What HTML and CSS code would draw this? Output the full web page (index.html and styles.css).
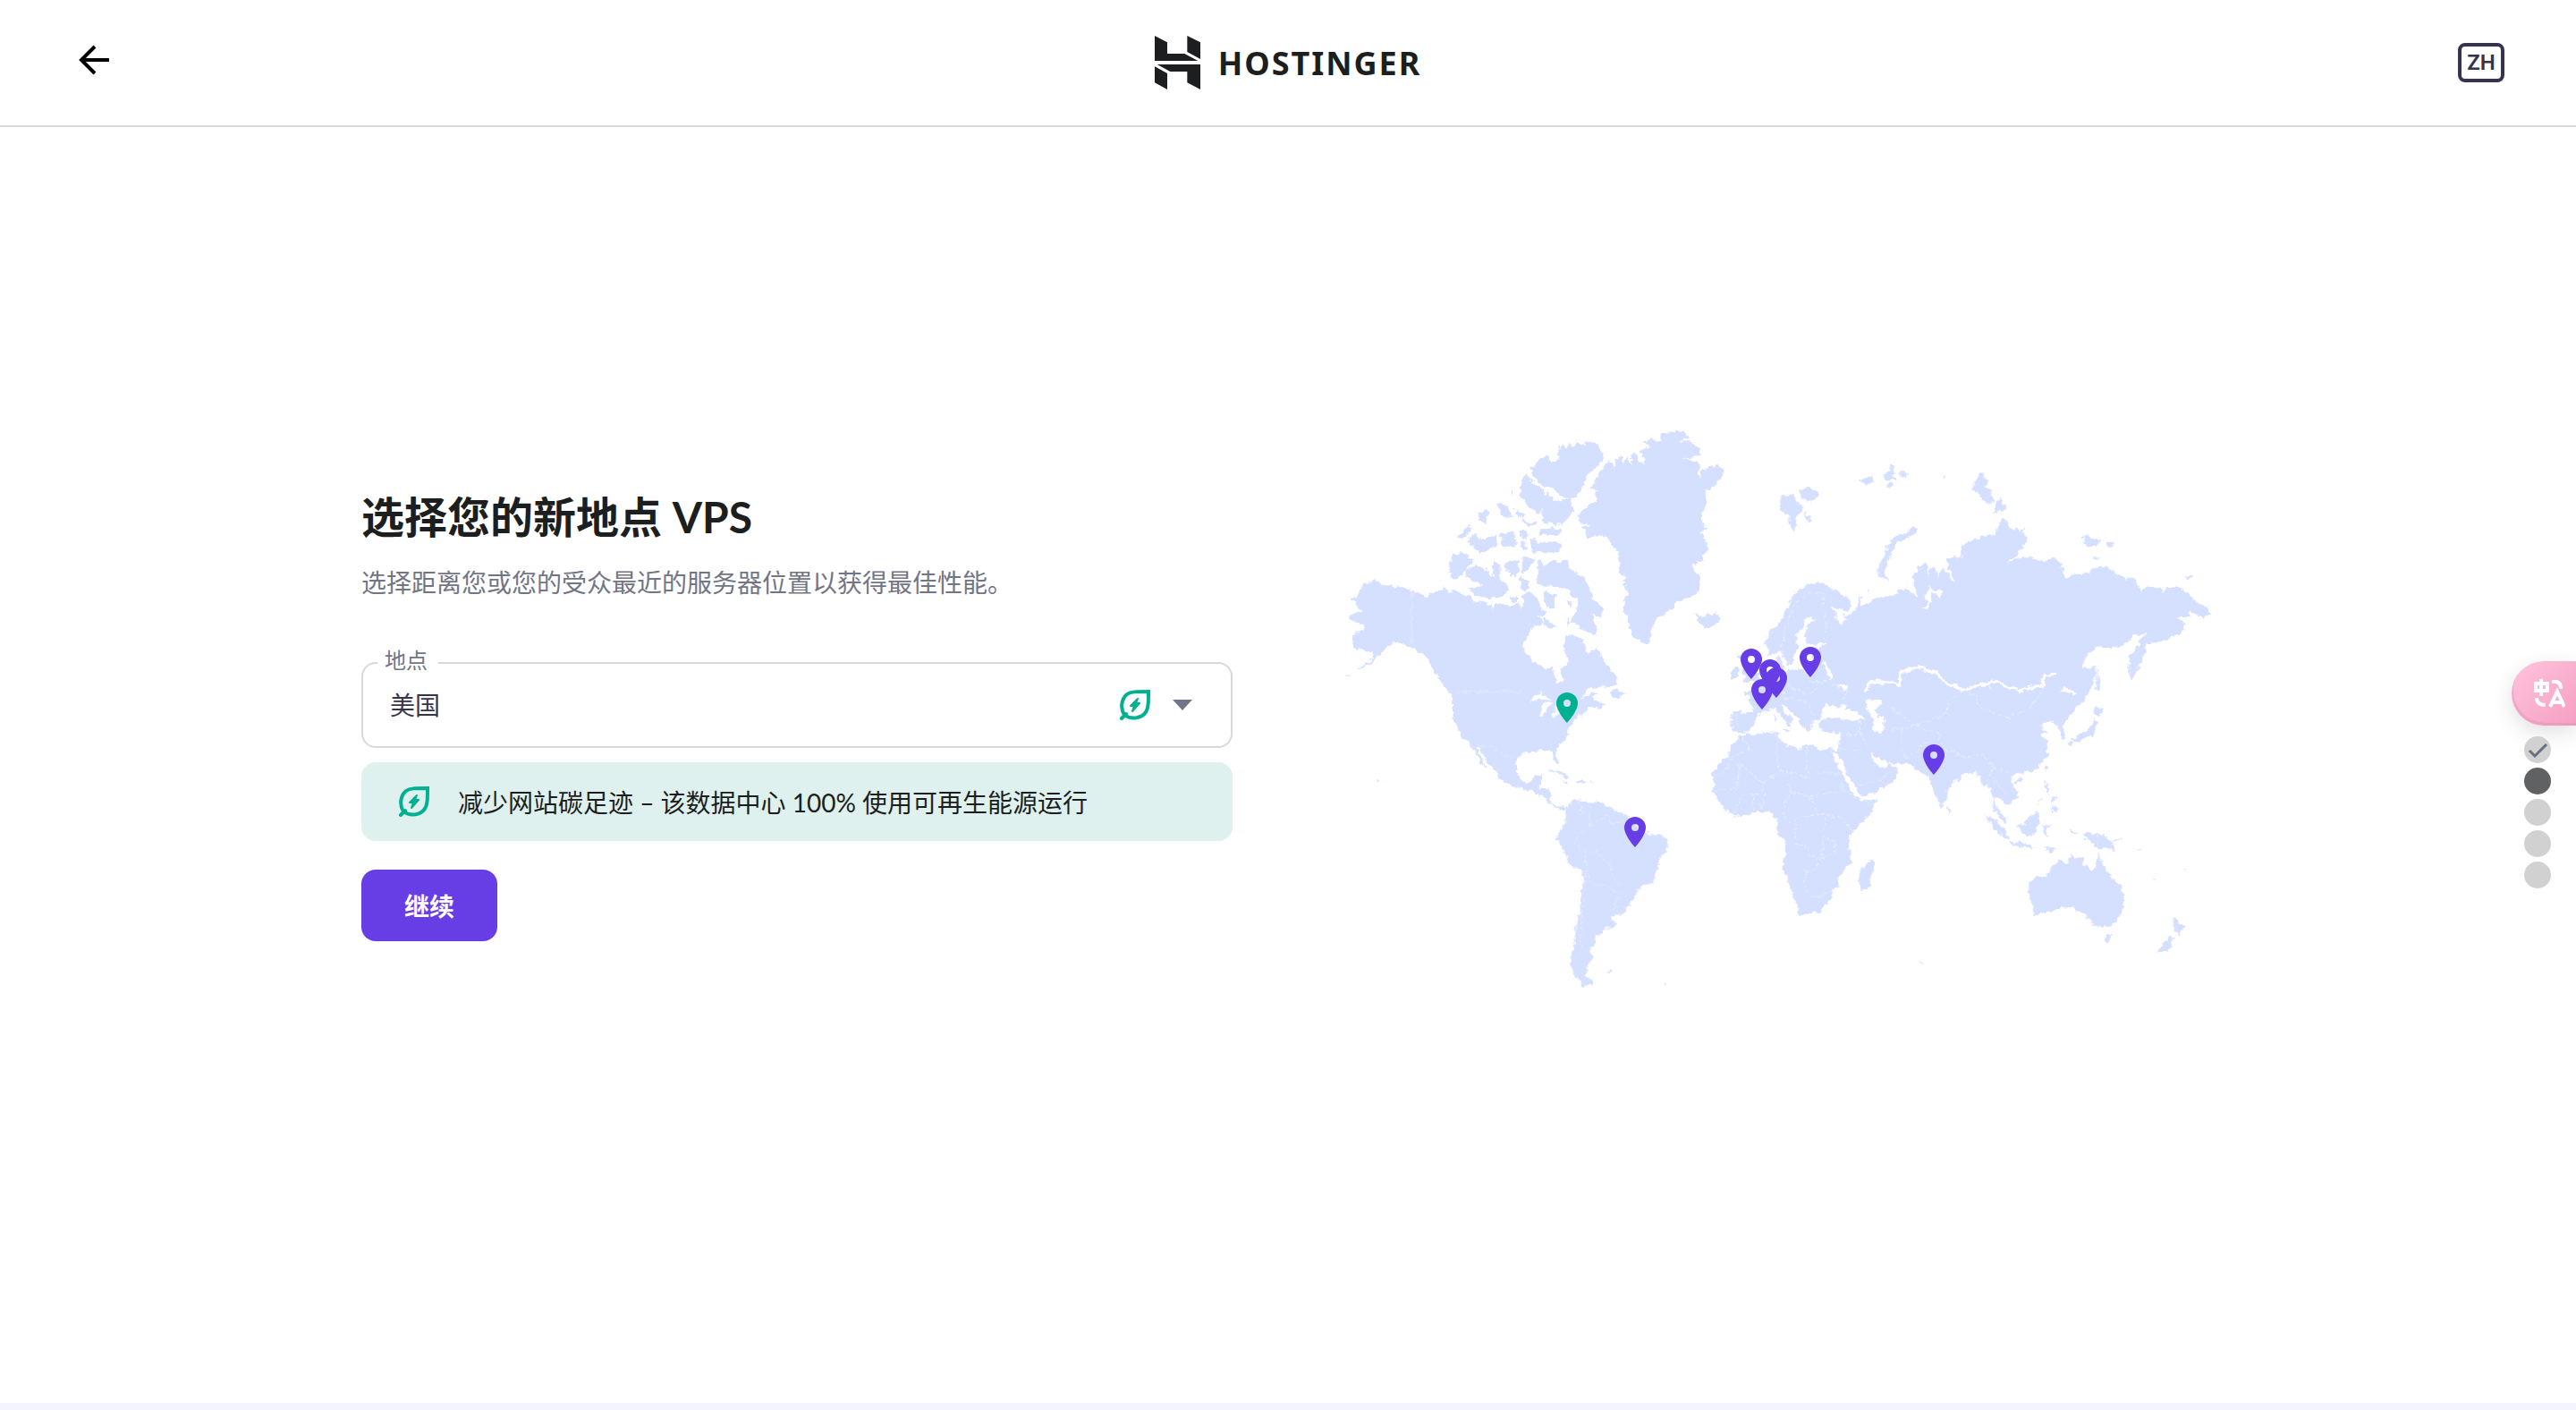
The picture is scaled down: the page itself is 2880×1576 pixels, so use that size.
FILE: index.html
```html
<!DOCTYPE html>
<html lang="zh-CN">
<head>
  <meta charset="utf-8">
  <meta name="viewport" content="width=device-width, initial-scale=1">
  <title>Hostinger VPS</title>
  <link rel="stylesheet" href="styles.css">
</head>
<body>
  <svg class="defs" width="0" height="0" aria-hidden="true">
    <symbol id="eco" viewBox="0 0 34 34">
      <path d="M5 28C0 20 2 10 8 5 12 2 18 2 32 2 32 14 32 20 29 25 24 32 13 34 5 28ZM7 27L2 32" fill="none" stroke="#00b090" stroke-width="4" stroke-linecap="round"/>
      <path d="M20 10L12 18H16L14 24 22 15H18Z" fill="#00b090" stroke="#00b090" stroke-width="2" stroke-linejoin="round"/>
    </symbol>
    <symbol id="pin" viewBox="0 0 24 34">
      <path fill-rule="evenodd" d="M12 0A12 12 0 0 0 0 12C0 21 12 34 12 34S24 21 24 12A12 12 0 0 0 12 0ZM12 8A4 4 0 1 1 12 16 4 4 0 0 1 12 8Z"/>
    </symbol>
  </svg>

  <header class="header">
    <button class="back" aria-label="返回">
      <svg width="36" height="40" viewBox="0 0 36 40"><path d="M18 2L3 17 18 32M3 17H34" fill="none" stroke="#000" stroke-width="4"/></svg>
    </button>
    <a class="logo" href="#">
      <svg width="51" height="60" viewBox="90 60 153 180" fill="#1d1e20">
        <path d="M90 60L132 82V120H190L235 144H90ZM199 60L243 82V138L199 114ZM98 156H243V240L199 217V180H142ZM90 163L132 186V240L90 217Z"/>
      </svg>
      <span class="logo-text">HOSTINGER</span>
    </a>
    <button class="lang">ZH</button>
  </header>

  <main class="main">
    <form class="form">
      <h1 class="title">选择您的新地点 VPS</h1>
      <p class="subtitle">选择距离您或您的受众最近的服务器位置以获得最佳性能。</p>
      <div class="field">
        <label class="field-label" for="location">地点</label>
        <select class="field-select" id="location">
          <option>美国</option>
        </select>
        <div class="field-icons">
          <svg width="34" height="34"><use href="#eco"/></svg>
          <svg width="24" height="12" viewBox="0 0 24 12"><path d="M1 0H23L12 12Z" fill="#727586"/></svg>
        </div>
      </div>
      <div class="notice">
        <svg width="34" height="34"><use href="#eco"/></svg>
        <span>减少网站碳足迹 – 该数据中心 100% 使用可再生能源运行</span>
      </div>
      <button class="submit" type="button">继续</button>
    </form>

    <svg class="map" viewBox="1502 480 974 638">
      <filter id="coast" x="-5%" y="-5%" width="110%" height="110%">
        <feTurbulence type="fractalNoise" baseFrequency="0.16" numOctaves="3" seed="4"/>
        <feDisplacementMap in="SourceGraphic" scale="8" xChannelSelector="R" yChannelSelector="G"/>
      </filter>
      <g class="land" filter="url(#coast)">
        <!-- North America and Greenland -->
        <g transform="translate(1480 460) scale(.3333)">
          <path d="M170 562L185 575 205 580 240 585 295 600 325 612 342 622 352 612 385 600 405 590 415 605 445 602 470 608 500 625 510 640 540 642 560 648 567 665 575 645 600 645 630 650 655 645 660 662 668 640 665 620 680 605 700 610 715 625 720 645 735 655 730 670 745 675 735 690 710 685 735 700 725 715 700 722 690 740 672 775 670 800 690 825 715 845 740 858 770 862 775 880 785 905 795 912 802 895 795 865 815 850 818 830 808 810 808 770 815 748 835 750 850 755 865 765 875 780 875 800 890 812 905 800 912 785 925 810 940 835 960 860 985 885 985 905 960 920 925 925 895 928 870 955 855 970 880 955 905 940 920 942 905 955 910 970 930 975 950 985 915 1000 905 990 870 1008 865 1020 845 1030 830 1050 820 1065 822 1090 800 1108 778 1128 778 1150 790 1175 785 1185 770 1165 768 1140 740 1135 700 1142 665 1148 648 1160 648 1205 660 1235 675 1245 700 1238 708 1218 735 1216 725 1240 722 1262 755 1265 762 1285 758 1305 780 1325 800 1325 812 1330 805 1340 780 1330 750 1310 735 1290 705 1280 680 1265 650 1262 615 1248 585 1230 582 1210 560 1185 535 1155 515 1125 510 1130 530 1165 550 1200 535 1192 515 1160 495 1120 465 1098 450 1065 435 1040 432 1000 432 965 405 925 385 895 370 870 355 840 330 812 310 795 285 788 260 780 235 770 215 785 185 820 150 850 110 868 140 845 165 825 160 810 125 800 100 790 95 760 105 740 135 730 135 710 95 705 80 688 105 675 135 670 115 655 90 632 120 605 135 580Z"/>
          <path d="M1180 62L1210 68 1228 90 1185 102 1232 98 1265 125 1262 145 1240 155 1198 160 1245 165 1262 180 1255 228 1268 205 1285 185 1320 178 1347 195 1330 225 1300 258 1280 270 1285 310 1268 345 1270 380 1290 390 1262 405 1278 425 1282 450 1290 460 1275 480 1270 505 1235 510 1240 530 1262 545 1262 595 1235 622 1185 632 1160 672 1115 695 1100 735 1088 788 1065 775 1045 765 1025 725 1020 690 1005 665 1008 630 1025 600 1000 575 1018 560 990 540 990 500 980 465 955 425 920 415 885 425 865 390 900 380 860 375 850 345 880 325 910 300 915 265 895 260 915 220 940 190 960 165 975 195 980 160 1003 150 1010 178 1020 150 1035 185 1030 140 1050 150 1075 180 1075 155 1058 130 1100 120 1068 108 1100 90 1130 100 1130 75Z"/>
          <path d="M780 125L800 108 812 125 820 104 835 118 850 98 862 115 880 100 920 115 942 148 915 185 885 210 870 250 845 290 800 290 770 255 735 250 700 215 695 185 720 165 750 145 765 165 790 160ZM680 205L700 235 740 265 750 300 720 345 690 320 660 290 660 245ZM750 265L775 300 830 290 835 330 830 350 800 380 735 375 730 345ZM720 395L800 390 800 412 725 410ZM690 420L720 440 785 435 795 460 780 472 700 472ZM430 482L465 475 500 500 475 535 445 565 420 545ZM480 530L510 512 545 530 565 555 570 500 590 510 590 560 620 600 600 620 540 625 510 615 480 595 530 585 475 550ZM720 500L735 500 735 520 750 505 810 500 830 530 870 555 895 590 895 620 940 665 920 695 895 670 915 720 915 750 870 735 830 700 850 660 850 630 820 600 790 590 740 585 715 570Z"/>
          <path d="M445 420L490 380 495 400 460 430ZM480 430L510 410 530 430 575 415 580 450 520 475ZM582 305L610 310 635 355 600 350ZM520 340L550 328 545 375 522 370ZM590 410L640 405 645 455 600 450ZM665 490L705 490 690 530 665 545ZM610 510L650 495 655 545 630 555ZM660 550L690 570 685 600 660 595ZM740 600L780 620 775 660 745 655ZM640 325L668 340 668 362 645 352ZM655 395L683 403 683 423 658 420ZM660 435L680 440 680 468 662 465ZM740 690L785 720 765 730 735 715ZM808 698L830 705 820 713ZM815 635L832 643 822 657ZM625 265L640 270 632 280ZM670 362L712 375 705 385 672 375ZM620 620L655 625 650 640 625 640ZM1245 678L1262 690 1300 678 1325 680 1330 695 1310 720 1280 728 1258 708ZM960 940L990 930 1005 950 990 962 965 955ZM755 1204L790 1205 830 1230 810 1228 770 1212ZM845 1240L870 1233 885 1243 850 1246ZM805 1240L820 1244 806 1247ZM892 1242L906 1244 893 1247ZM172 1228L183 1234 176 1240ZM72 885L90 878 80 888Z"/>
        </g>
        <!-- South America -->
        <g transform="translate(1600 820) scale(.3333)">
          <path d="M485 220L510 222 535 232 575 230 605 255 650 268 665 280 700 320 730 335 765 342 795 355 798 378 765 420 762 460 740 502 715 508 687 525 685 550 650 595 635 612 605 608 618 635 605 650 575 655 575 675 550 675 550 715 532 725 545 748 520 785 520 810 548 842 510 845 490 825 470 780 470 735 485 705 483 650 500 600 500 560 510 500 510 465 465 435 445 395 422 352 430 325 450 300 455 255 465 235ZM592 797L610 796 600 805ZM775 830L792 838 785 842ZM435 242L462 240 450 256Z"/>
        </g>
        <!-- Europe, Asia, Africa and Oceania -->
        <g transform="translate(1900 460) scale(.37 .3333)">
          <path d="M98 1005L150 1008 165 1005 155 975 150 955 130 940 160 930 185 915 205 890 225 870 240 850 232 825 245 818 248 845 262 868 300 865 320 870 340 860 340 820 345 795 375 785 380 772 350 785 325 780 318 750 330 715 348 695 335 685 318 695 312 725 290 745 292 775 300 795 285 820 282 848 262 852 255 825 245 800 230 810 210 815 200 775 205 745 240 715 255 685 270 650 275 620 300 595 330 580 355 572 385 578 395 595 425 605 455 635 458 655 440 668 400 650 395 655 412 675 415 700 430 712 445 695 430 680 455 680 470 665 485 620 490 620 485 650 515 640 535 625 575 620 600 610 600 590 630 600 658 620 645 590 645 550 660 530 665 512 688 515 690 550 695 580 685 620 690 640 675 655 665 655 685 665 700 640 700 610 720 610 730 640 728 600 700 600 690 570 695 530 710 520 720 555 735 530 755 545 765 580 768 550 750 525 748 490 790 490 790 455 815 435 860 418 895 408 900 380 918 358 935 375 935 395 975 395 988 420 980 455 950 490 928 515 960 490 1000 490 1040 505 1065 490 1095 505 1100 540 1115 565 1125 545 1180 545 1185 520 1220 520 1245 530 1280 558 1320 565 1335 610 1340 592 1395 590 1400 610 1410 588 1450 590 1485 620 1510 645 1540 660 1540 680 1520 695 1495 675 1480 665 1480 690 1445 690 1465 710 1465 735 1420 760 1380 775 1350 775 1345 820 1325 860 1305 905 1297 870 1300 820 1330 775 1355 740 1310 750 1290 775 1265 790 1200 788 1175 815 1150 855 1180 865 1200 850 1196 880 1185 930 1160 970 1140 995 1110 1030 1095 1050 1108 1075 1105 1095 1090 1095 1085 1065 1075 1045 1055 1035 1030 1055 1040 1070 1055 1070 1035 1085 1050 1110 1052 1150 1030 1185 1005 1205 975 1212 945 1222 940 1240 960 1270 962 1295 935 1320 900 1290 890 1300 895 1325 920 1350 925 1380 905 1365 885 1320 885 1280 870 1245 860 1260 850 1230 835 1205 800 1215 770 1245 750 1270 748 1300 730 1328 715 1295 700 1255 695 1215 685 1222 665 1205 640 1185 600 1180 580 1180 555 1170 520 1145 512 1142 525 1165 545 1195 565 1190 575 1180 600 1205 590 1235 555 1262 520 1280 485 1290 478 1270 455 1230 432 1180 412 1140 398 1140 418 1185 440 1235 462 1280 485 1305 538 1300 520 1345 485 1385 460 1415 448 1435 455 1475 460 1515 420 1555 420 1590 400 1605 400 1630 370 1675 345 1683 305 1690 297 1680 295 1655 275 1605 268 1570 250 1530 250 1510 263 1485 260 1440 235 1410 232 1390 238 1365 215 1348 200 1342 150 1350 108 1358 75 1330 55 1305 40 1275 45 1245 40 1215 60 1180 90 1150 90 1125 115 1100 120 1087 160 1085 185 1078 240 1075 240 1100 265 1115 300 1135 310 1120 335 1120 370 1135 395 1130 415 1135 425 1100 425 1078 400 1075 370 1075 358 1050 370 1035 420 1025 460 1035 500 1030 480 1010 460 1000 440 1000 445 980 430 985 415 995 385 980 370 1000 368 1030 345 1035 335 1060 325 1075 310 1050 290 1020 260 990 250 985 255 1005 285 1035 280 1045 275 1065 260 1040 240 1005 220 995 190 1010 165 1040 160 1055 145 1075 120 1078 98 1070Z"/>
          <path d="M112 815L140 815 145 840 160 870 178 885 180 900 130 912 140 890 128 870 130 840ZM92 905L95 870 110 858 122 865 118 890ZM648 385L660 395 630 425 600 435 580 475 568 510 560 540 575 570 545 555 535 540 550 505 560 470 580 430 605 410 625 405ZM243 280L265 285 285 275 290 300 315 320 300 345 285 405 268 370 270 345 245 335ZM300 265L330 255 360 265 355 290 335 305 310 288ZM315 335L340 365 325 378ZM850 200L870 230 865 255 885 270 885 310 865 305 845 280 825 260 830 240ZM905 290L928 325 885 342ZM1160 415L1190 425 1215 430 1200 450 1165 450ZM1230 432L1255 444 1245 456 1230 448ZM1185 485L1205 493 1193 501ZM1465 555L1485 545 1492 555 1468 565ZM485 232L515 215 530 232 500 250ZM555 210L580 190 588 215 600 225 570 235ZM575 180L590 185 580 195ZM600 205L632 205 620 225ZM565 240L585 245 575 258ZM735 214L746 217 737 221ZM510 598L520 605 510 612Z"/>
          <path d="M1198 985L1225 1005 1208 1020 1190 1015ZM1192 1022L1200 1045 1190 1085 1165 1095 1145 1105 1120 1105 1150 1085 1170 1070 1185 1050ZM1118 1105L1130 1110 1124 1126 1116 1120ZM1200 860L1205 900 1210 935 1198 930 1198 890ZM1048 1185L1052 1195 1047 1207 1042 1197ZM955 1235L975 1230 967 1242 957 1242ZM1045 1240L1058 1250 1055 1290 1045 1265ZM1062 1290L1078 1300 1068 1315ZM1065 1320L1085 1325 1080 1345 1060 1335ZM1035 1295L1038 1300 1022 1318ZM750 1315L760 1340 748 1342ZM862 1352L885 1360 920 1400 938 1435 920 1430 890 1395ZM938 1442L985 1450 1020 1465 975 1460 940 1450ZM1035 1463L1060 1466 1085 1462 1065 1475ZM960 1390L985 1375 1015 1345 1028 1360 1025 1385 1010 1420 975 1415ZM1035 1385L1062 1388 1045 1400 1058 1430 1040 1415ZM1120 1405L1145 1413 1130 1417ZM1155 1420L1175 1410 1220 1420 1245 1445 1258 1475 1235 1465 1205 1465 1185 1450ZM1248 1440L1280 1430 1260 1445ZM1205 1480L1220 1520 1235 1550 1270 1590 1285 1620 1280 1665 1260 1710 1240 1728 1190 1725 1170 1695 1150 1680 1130 1660 1095 1665 1060 1680 1010 1690 1005 1650 995 1610 995 1580 1020 1560 1050 1555 1065 1525 1090 1505 1110 1515 1120 1490 1160 1495 1155 1515 1190 1540 1200 1520ZM1222 1755L1248 1755 1238 1782 1228 1778ZM1430 1695L1450 1715 1468 1722 1445 1760 1435 1740ZM1425 1755L1435 1765 1410 1815 1385 1810 1400 1785ZM523 1492L530 1520 510 1600 488 1605 480 1575 488 1530 510 1515ZM228 1015L233 1030 226 1050ZM255 1065L272 1066 262 1073ZM1365 1560L1385 1575 1375 1572ZM1460 1538L1470 1536 1464 1543ZM1320 1465L1342 1470 1330 1470ZM665 1850L675 1850 670 1856Z"/>
        </g>
      </g>
      <!-- Inland seas and lakes -->
      <g class="water" filter="url(#coast)">
        <path transform="translate(1900 460) scale(.37 .3333)" d="M505 970L550 965 545 985 530 1000 540 1020 558 1025 558 1070 545 1078 525 1065 525 1030 505 1000Z"/>
        <path transform="translate(1480 460) scale(.3333)" d="M692 968L725 942 745 950 760 970 730 965ZM735 980L775 975 755 985 742 1000 735 1025 725 1025ZM778 985L785 1005 795 1010 770 1028 762 1020 775 1010Z"/>
      </g>
      <g class="borders" filter="url(#coast)">
        <path class="border-wide" transform="translate(1900 460) scale(.37 .3333)" d="M500 940L515 910 540 905 605 915 605 875 665 855 685 870 710 870 745 910 800 935 845 915 875 920 885 900 920 920 970 935 1035 920 1040 885 1075 880M1095 930L1135 945M375 840L400 895M420 920L450 925"/>
        <path class="border-thin" transform="translate(1900 460) scale(.37 .3333)" d="M248 810L255 740 290 640 330 610 375 610 370 660 385 710 380 770M265 870L270 920 330 950 380 905 450 935 430 970M240 920L260 960 320 970 345 1020M320 870L330 905 390 905M800 935L750 975 750 1010 690 1040 650 1050 600 1010 570 990M800 935L830 950 850 995 930 1025 990 1005 1035 940M560 1065L610 1065 650 1050 720 1080 740 1130 800 1160 860 1150 885 1190 870 1240M610 1065L610 1140 625 1165 700 1100M485 1035L485 1075 510 1130M425 1085L485 1080M420 1130L490 1140M480 1255L550 1235 575 1205M885 1190L940 1215M885 1230L930 1290M120 1180L190 1245 250 1205 335 1230M235 1080L235 1180 250 1205M120 1180L115 1265 45 1270M130 1090L150 1130 95 1165 70 1215 45 1215M325 1125L325 1215M350 1212L425 1212M190 1245L190 1275 130 1290 100 1350M275 1205L275 1275 250 1340 270 1380M275 1275L330 1290 360 1350 290 1365M330 1290L430 1270 430 1245M430 1270L520 1320M360 1350L430 1360 460 1410M290 1365L290 1450 320 1455 330 1490 370 1500 380 1360M370 1500L410 1480 405 1440 380 1430M370 1500L350 1535 320 1540 320 1610 360 1630 400 1600M160 1285L165 1345M200 1280L180 1340M98 1020L115 1020 112 1070M1205 1418L1205 1462"/>
        <path class="border-thin" transform="translate(1600 820) scale(.3333)" d="M497 225L500 260 530 270 535 305 565 290 590 270 600 300 650 295M535 305L490 340 485 375 515 395 520 430 530 495 600 515 640 540 615 570 605 605M545 395L600 435 610 490 640 510M520 430L515 540 505 600 500 740M620 575L645 590M135 40L210 45 235 70 270 80"/>
        <path class="border-line" transform="translate(1480 460) scale(.3333)" d="M295 600V785M445 940H665"/>
      </g>
      <g class="pins">
        <use href="#pin" x="2012" y="723" width="24" height="34"/>
        <use href="#pin" x="1946" y="725" width="24" height="34"/>
        <use href="#pin" x="1967" y="737" width="24" height="34"/>
        <use href="#pin" x="1974" y="746" width="24" height="34"/>
        <use href="#pin" x="1958" y="759" width="24" height="34"/>
        <use href="#pin" x="2150" y="832" width="24" height="34"/>
        <use href="#pin" x="1816" y="913" width="24" height="34"/>
        <use class="pin-active" href="#pin" x="1740" y="774" width="24" height="34"/>
      </g>
    </svg>
  </main>

  <footer class="footer"></footer>

  <aside class="side">
    <button class="translate" aria-label="翻译">
      <svg width="36" height="34" viewBox="0 0 36 34" fill="none" stroke="#fff" stroke-width="4">
        <path d="M3 6H16V14H3ZM9 1V20M21 4H25Q31 4 31 12M4 22Q4 30 14 30"/>
        <path d="M19 32L27 15 35 32M22 27H32"/>
      </svg>
    </button>
    <div class="steps">
      <span class="step">
        <svg width="30" height="30" viewBox="0 0 30 30"><path d="M6 16L12 22 25 9" fill="none" stroke="#6b6e80" stroke-width="3"/></svg>
      </span>
      <span class="step step-current"></span>
      <span class="step"></span>
      <span class="step"></span>
      <span class="step"></span>
    </div>
  </aside>
</body>
</html>
```

FILE: styles.css
```css
* {
  box-sizing: border-box;
}
body {
  margin: 0;
  min-height: 100vh;
  display: flex;
  flex-direction: column;
  background-color: #fff;
  color: #1d1e20;
  font-family: Lato, "Noto Sans CJK SC", sans-serif;
  font-size: 28px;
}
button {
  border: 0;
  padding: 0;
  background: none;
  font-family: inherit;
  cursor: pointer;
}
svg {
  display: block;
  flex-shrink: 0;
}
.defs {
  position: absolute;
}

.header {
  display: grid;
  grid-template-columns: 1fr auto 1fr;
  align-items: center;
  height: 142px;
  padding: 0 80px;
  border-bottom: 2px solid #d8d8d8;
}
.back {
  justify-self: start;
  padding-left: 8px;
}
.logo {
  display: flex;
  align-items: center;
  gap: 20px;
  color: #1d1e20;
  text-decoration: none;
}
.logo-text {
  font-family: "Noto Sans", sans-serif;
  font-size: 36px;
  font-weight: 700;
  letter-spacing: 2px;
}
.lang {
  justify-self: end;
  width: 52px;
  height: 44px;
  border: 4px solid #36344d;
  border-radius: 8px;
  color: #36344d;
  font-family: Roboto, sans-serif;
  font-size: 24px;
  font-weight: 600;
}

.main {
  flex: 1;
  display: grid;
  grid-template-columns: 1fr 1fr;
  gap: 124px;
  align-items: center;
  align-content: start;
  width: 72%;
  max-width: 2072px;
  margin: 0 auto;
  padding-top: 338px;
}
.title {
  margin: 0 0 20px;
  font-size: 48px;
  line-height: 64px;
  font-weight: 700;
}
.subtitle {
  margin: 0 0 68px;
  color: #727586;
  line-height: 42px;
}
.field {
  position: relative;
  margin-bottom: 16px;
}
.field-label {
  position: absolute;
  top: -16px;
  left: 18px;
  padding: 0 12px 0 8px;
  background-color: #fff;
  color: #727586;
  font-size: 24px;
  line-height: 28px;
}
.field-select {
  display: block;
  width: 100%;
  height: 96px;
  padding: 0 128px 0 30px;
  border: 2px solid #d8d8d8;
  border-radius: 16px;
  background-color: #fff;
  color: #36344d;
  font-family: inherit;
  font-size: 28px;
  appearance: none;
}
.field-icons {
  position: absolute;
  top: 0;
  right: 44px;
  height: 96px;
  display: flex;
  align-items: center;
  gap: 24px;
  pointer-events: none;
}
.notice {
  display: flex;
  align-items: center;
  gap: 32px;
  height: 88px;
  margin-bottom: 32px;
  padding: 0 42px;
  border-radius: 16px;
  background-color: #def1ee;
}
.submit {
  height: 80px;
  padding: 0 48px;
  border-radius: 16px;
  background-color: #673de6;
  color: #fff;
  font-size: 28px;
  font-weight: 700;
}

.map {
  width: 100%;
}
.land {
  fill: #d5dfff;
}
.water {
  fill: #fff;
}
.borders {
  fill: none;
  stroke: #e8edff;
}
.border-wide {
  stroke: #fff;
  stroke-width: 10;
}
.border-thin {
  stroke-width: 3;
  stroke-dasharray: 14 6;
}
.border-line {
  stroke: #e2e5fc;
  stroke-width: 5;
}
.pins {
  fill: #673de6;
}
.pin-active {
  fill: #00b090;
}

.footer {
  height: 8px;
  background-color: #f4f4ff;
}

.side {
  position: absolute;
  top: 739px;
  right: 0;
  display: flex;
  flex-direction: column;
  align-items: flex-end;
  gap: 12px;
}
.translate {
  width: 72px;
  height: 72px;
  padding-left: 24px;
  border-radius: 36px 0 0 36px;
  background: linear-gradient(135deg, #ffc4de, #f59fc2);
  box-shadow: 0 8px 24px rgba(0, 0, 0, 0.12), inset 2px -3px 0 rgba(225, 130, 170, 0.3);
}
.steps {
  display: flex;
  flex-direction: column;
  gap: 5px;
  margin-right: 28px;
}
.step {
  width: 30px;
  height: 30px;
  border-radius: 50%;
  background-color: #d1d1d1;
}
.step-current {
  background-color: #606163;
}
```
